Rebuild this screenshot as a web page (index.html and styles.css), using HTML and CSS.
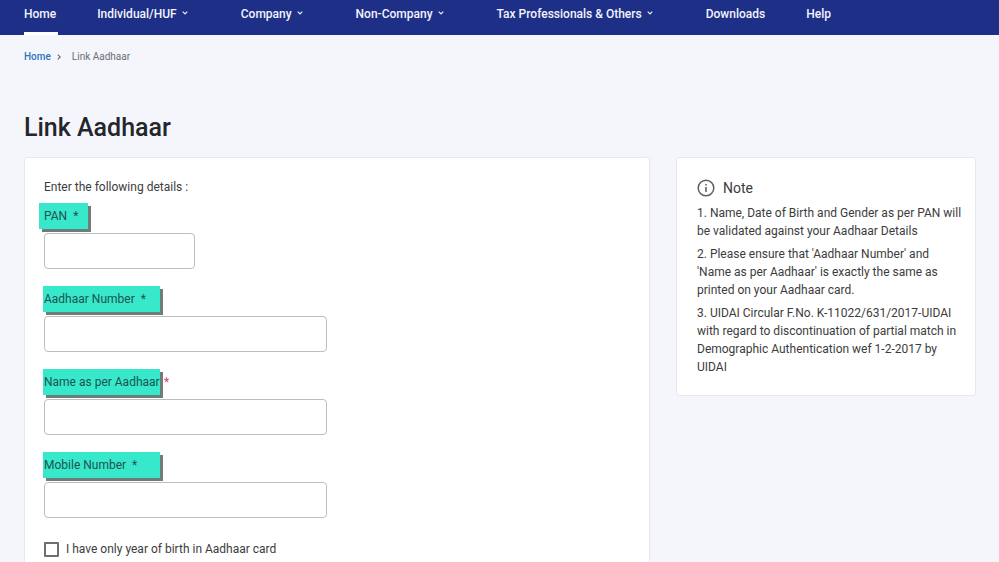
FILE: index.html
```html
<!DOCTYPE html>
<html lang="en">

<head>
    <meta charset="UTF-8">
    <meta name="viewport" content="width=device-width, initial-scale=1.0">
    <title>Link Aadhaar</title>
    <link rel="stylesheet" href="styles.css">
</head>

<body>
    <!-- main menu -->
    <nav class="navbar">
        <a href="#" class="nav-item active">Home</a>
        <a href="#" class="nav-item has-menu">Individual/HUF
            <svg class="chevron" viewBox="0 0 6 4"><path d="M0.7 0.7 L3 3 L5.3 0.7" /></svg></a>
        <a href="#" class="nav-item has-menu">Company
            <svg class="chevron" viewBox="0 0 6 4"><path d="M0.7 0.7 L3 3 L5.3 0.7" /></svg></a>
        <a href="#" class="nav-item has-menu">Non-Company
            <svg class="chevron" viewBox="0 0 6 4"><path d="M0.7 0.7 L3 3 L5.3 0.7" /></svg></a>
        <a href="#" class="nav-item has-menu">Tax Professionals &amp; Others
            <svg class="chevron" viewBox="0 0 6 4"><path d="M0.7 0.7 L3 3 L5.3 0.7" /></svg></a>
        <a href="#" class="nav-item">Downloads</a>
        <a href="#" class="nav-item">Help</a>
    </nav>

    <main class="page">
        <div class="breadcrumb">
            <a href="#">Home</a>
            <svg class="crumb-arrow" viewBox="0 0 4 6"><path d="M0.8 0.6 L3.2 3 L0.8 5.4" /></svg>
            <span>Link Aadhaar</span>
        </div>

        <h1>Link Aadhaar</h1>

        <div class="content">
            <form class="card form-card">
                <p class="intro">Enter the following details :</p>

                <div class="field">
                    <label for="pan" class="tag tag-short">PAN <span class="star">*</span></label>
                    <input type="text" id="pan" class="short">
                </div>
                <div class="field">
                    <label for="aadhaar" class="tag">Aadhaar Number <span class="star">*</span></label>
                    <input type="text" id="aadhaar">
                </div>
                <div class="field">
                    <div class="label-row">
                        <label for="name" class="tag">Name as per Aadhaar</label>
                        <span class="required">*</span>
                    </div>
                    <input type="text" id="name">
                </div>
                <div class="field">
                    <label for="mobile" class="tag">Mobile Number <span class="star">*</span></label>
                    <input type="text" id="mobile">
                </div>

                <div class="check">
                    <input type="checkbox" id="birthyear">
                    <label for="birthyear">I have only year of birth in Aadhaar card</label>
                </div>
            </form>

            <!-- side note -->
            <aside class="card note">
                <h2>
                    <svg class="info" viewBox="0 0 18 18">
                        <circle cx="9" cy="9" r="7.8" />
                        <path d="M9 8 V13 M9 5 V6.4" />
                    </svg>
                    Note
                </h2>
                <p>1. Name, Date of Birth and Gender as per PAN will be validated against your Aadhaar Details</p>
                <p>2. Please ensure that 'Aadhaar Number' and 'Name as per Aadhaar' is exactly the same as printed on your Aadhaar card.</p>
                <p>3. UIDAI Circular F.No. K-11022/631/2017-UIDAI with regard to discontinuation of partial match in Demographic Authentication wef 1-2-2017 by UIDAI</p>
            </aside>
        </div>
    </main>
</body>

</html>
```

FILE: styles.css
```css
* {
    box-sizing: border-box;
}

body {
    margin: 0;
    font-family: Roboto, "Liberation Sans", sans-serif;
    font-size: 12px;
    line-height: 18px;
    color: #3c3c3c;
    background: #f4f6fb;
}

a {
    text-decoration: none;
}

/* main menu */
.navbar {
    display: flex;
    gap: 39px;
    height: 35px;
    padding: 0 24px;
    background: #1e2f87;
}

.nav-item {
    display: flex;
    gap: 5px;
    padding: 5px 2px 0 0;
    font-size: 12px;
    font-weight: 500;
    white-space: nowrap;
    color: #f2f4fd;
}

.nav-item.active {
    border-bottom: 3px solid #ffffff;
}

.nav-item.has-menu {
    padding-right: 14px;
}

.chevron {
    width: 6px;
    height: 4px;
    margin-top: 6px;
}

.chevron path,
.crumb-arrow path {
    fill: none;
    stroke: #e9ecfa;
    stroke-width: 1.2;
}

/* page */
.page {
    padding: 0 23px 0 24px;
}

.breadcrumb {
    display: flex;
    align-items: center;
    padding-top: 13px;
    font-size: 10px;
    color: #6b6e74;
}

.breadcrumb a {
    color: #2f74bd;
    font-weight: 500;
}

.crumb-arrow {
    width: 4px;
    height: 6px;
    margin: 0 11px 0 6px;
}

.crumb-arrow path {
    stroke: #6b6e74;
}

h1 {
    margin: 47px 0 14px;
    font-size: 25px;
    font-weight: 500;
    line-height: 30px;
    color: #24262b;
}

.content {
    display: grid;
    grid-template-columns: minmax(0, 1fr) 300px;
    gap: 26px;
    align-items: start;
}

.card {
    background: #ffffff;
    border: 1px solid #e6e8ee;
    border-radius: 3px;
}

/* form */
.form-card {
    padding: 20px 19px 60px;
}

.intro {
    margin: 0 0 7px;
}

.field {
    display: flex;
    flex-direction: column;
    align-items: flex-start;
    gap: 4px;
    margin-bottom: 17px;
}

.tag {
    width: 117px;
    height: 26px;
    margin-left: -1px;
    padding-left: 1px;
    line-height: 27px;
    white-space: nowrap;
    color: #1d5350;
    background: #38e8cb;
    box-shadow: 3px 3px 0 #6e7c7c;
}

.tag-short {
    width: 49px;
    margin-left: -5px;
    padding-left: 5px;
}

.star {
    margin-left: 3px;
}

.label-row {
    display: flex;
    gap: 4px;
    height: 26px;
}

.required {
    line-height: 27px;
    color: #d9444f;
}

.field input {
    width: 283px;
    height: 36px;
    padding: 0 10px;
    font: inherit;
    border: 1px solid #bdbdbd;
    border-radius: 4px;
    background: #ffffff;
}

.field input.short {
    width: 151px;
}

.check {
    display: flex;
    align-items: center;
    gap: 7px;
    padding-top: 5px;
}

.check input {
    appearance: none;
    width: 15px;
    height: 15px;
    margin: 0;
    border: 2px solid #6f6f6f;
    border-radius: 1px;
}

.check input:checked {
    background: #1e2f87;
}

/* note */
.note {
    padding: 20px 12px 14px 20px;
}

.note h2 {
    display: flex;
    align-items: center;
    gap: 8px;
    margin: 0 0 6px;
    font-size: 14px;
    font-weight: 400;
    line-height: 20px;
}

.info {
    width: 18px;
    height: 18px;
}

.info circle,
.info path {
    fill: none;
    stroke: #5c5c5c;
    stroke-width: 1.5;
}

.note p {
    margin: 0 0 5px;
}
```
